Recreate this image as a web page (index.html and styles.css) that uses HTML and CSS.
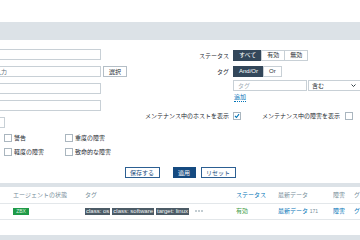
FILE: index.html
```html
<!DOCTYPE html>
<html lang="ja">
<head>
<meta charset="UTF-8">
<meta name="viewport" content="width=device-width, initial-scale=1.0">
<title>ホスト</title>
<link rel="stylesheet" href="styles.css">
</head>
<body>
    <div class="top"></div>
    <div class="tabbar"></div>
    <form class="filter">
        <div class="cols">
            <!-- 左側: 名前, ホストグループ, IP, DNS, ポート, 深刻度 -->
            <div class="col_left">
                <div class="row"><input class="text wide" type="text"></div>
                <div class="row">
                    <input class="text wide" type="text" placeholder="ここに入力">
                    <button class="btn_grey" type="button">選択</button>
                </div>
                <div class="row"><input class="text wide" type="text"></div>
                <div class="row"><input class="text wide" type="text"></div>
                <div class="row"><input class="text port" type="text"></div>
                <div class="sev">
                    <label class="chk"><span class="cb"></span>警告</label>
                    <label class="chk"><span class="cb"></span>重度の障害</label>
                    <label class="chk"><span class="cb"></span>軽度の障害</label>
                    <label class="chk"><span class="cb"></span>致命的な障害</label>
                </div>
            </div>
            <!-- 右側: ステータス, タグ, メンテナンス -->
            <div class="col_right">
                <div class="frow r1">
                    <span class="lbl">ステータス</span>
                    <div class="seg">
                        <span class="on">すべて</span>
                        <span>有効</span>
                        <span>無効</span>
                    </div>
                </div>
                <div class="frow r2">
                    <span class="lbl">タグ</span>
                    <div class="seg">
                        <span class="on">And/Or</span>
                        <span>Or</span>
                    </div>
                </div>
                <div class="frow r3">
                    <span class="lbl"></span>
                    <input class="text tagname" type="text" placeholder="タグ">
                    <div class="select">
                        <span>含む</span>
                        <svg width="5" height="3" viewBox="0 0 5 3"><path d="M0.5 0.5 L2.5 2.5 L4.5 0.5" fill="none" stroke="#1f2c33" stroke-width="0.9"/></svg>
                    </div>
                </div>
                <div class="frow r4">
                    <span class="lbl"></span>
                    <a class="add" href="#">追加</a>
                </div>
                <div class="frow r5">
                    <span class="lbl">メンテナンス中のホストを表示</span>
                    <span class="cb checked">
                        <svg width="6" height="6" viewBox="0 0 6 6"><path d="M1 3 L2.5 4.5 L5 1.2" fill="none" stroke="#0275b8" stroke-width="1.1"/></svg>
                    </span>
                    <span class="lbl2">メンテナンス中の障害を表示</span>
                    <span class="cb"></span>
                </div>
            </div>
        </div>
        <div class="actions">
            <button class="btn_alt save" type="button">保存する</button>
            <button class="btn_main" type="button">適用</button>
            <button class="btn_alt" type="button">リセット</button>
        </div>
    </form>

    <div class="list">
        <table>
            <colgroup>
                <col style="width:85px">
                <col style="width:151px">
                <col style="width:42px">
                <col style="width:55px">
                <col style="width:21px">
                <col style="width:46px">
            </colgroup>
            <thead>
                <tr>
                    <th class="first">エージェントの状態</th>
                    <th>タグ</th>
                    <th class="sort">ステータス</th>
                    <th>最新データ</th>
                    <th>障害</th>
                    <th>グラフ</th>
                </tr>
            </thead>
            <tbody>
                <tr>
                    <td class="first"><span class="zbx">ZBX</span></td>
                    <td>
                        <span class="tag">class: os</span><span class="tag">class: software</span><span class="tag">target: linux</span>
                        <svg class="more" width="8" height="2" viewBox="0 0 8 2"><circle cx="1" cy="1" r="0.8" fill="#768d99"/><circle cx="4" cy="1" r="0.8" fill="#768d99"/><circle cx="7" cy="1" r="0.8" fill="#768d99"/></svg>
                    </td>
                    <td class="green">有効</td>
                    <td><a href="#">最新データ</a> <sup>171</sup></td>
                    <td><a href="#">障害</a></td>
                    <td><a href="#">グラフ</a></td>
                </tr>
            </tbody>
        </table>
    </div>
</body>
</html>
```

FILE: styles.css
```css
*{margin:0;padding:0;box-sizing:border-box}
html,body{overflow:hidden}
body{width:360px;height:240px;background:#dce2e7;font-family:"Liberation Sans","Noto Sans CJK JP",sans-serif;font-size:6px;line-height:8px;color:#1f2c33}
a{color:#0275b8;text-decoration:none}
button,input{font-family:inherit;font-size:6px;color:#1f2c33}

.top {height: 22px; background: #fff;}
.tabbar {height: 18px;}
.filter {background: #fff; height: 143px; padding-top: 9px;}
.cols {display: flex;}

/* left column */
.col_left {margin-left: -28px; width: 155px; flex: none;}
.row {display: flex; align-items: center; height: 11px; margin-bottom: 6px;}
.text {height: 11px; border: 1px solid #c8d0d6; background: #fff; padding: 0 4px; outline: none;}
.text::placeholder {color: #5f6f7a;}
.wide {width: 129px;}
.port {width: 33px;}
.btn_grey {width: 24px; height: 11px; margin-left: 2px; border: 1px solid #b4bec6; background: #fff;}
.sev {display: grid; grid-template-columns: 61px 61px; row-gap: 6px; padding-left: 32px;}
.chk {display: flex; align-items: center; height: 8px;}
.chk .cb {margin-right: 2px;}
.cb {width: 8px; height: 8px; border: 1px solid #aab6bf; background: #fff; display: inline-flex; align-items: center; justify-content: center; flex: none;}

/* right column */
.col_right {margin-left: 13px; padding-top: 1px; flex: 1;}
.frow {display: flex; align-items: center; height: 11px;}
.lbl {width: 89px; text-align: right; margin-right: 4px; flex: none; white-space: nowrap;}
.r1 {margin-bottom: 5px;}
.r2 {margin-bottom: 3px;}
.r3 {margin-bottom: 3px;}
.r4 {height: 8px; margin-bottom: 10px;}
.r5 {height: 8px;}
.seg {display: flex;}
.seg span {height: 11px; line-height: 9px; padding: 0 5px; border: 1px solid #c8d0d6; margin-left: -1px; background: #fff;}
.seg span:first-child {margin-left: 0;}
.seg span.on {background: #33475a; border-color: #33475a; color: #fff;}
.tagname {width: 74px;}
.text.tagname::placeholder {color: #a3aeb6;}
.select {width: 53px; height: 11px; margin-left: 1px; border: 1px solid #c8d0d6; display: flex; align-items: center; justify-content: space-between; padding: 0 4px 0 3px;}
.add {border-bottom: 1px dotted #0275b8; line-height: 7px; margin-left: 1px;}
.lbl2 {margin-left: 21px; margin-right: 5px; white-space: nowrap;}

/* buttons */
.actions {display: flex; justify-content: center; margin-top: 11px;}
.actions button {height: 11px; padding: 0;}
.btn_alt {width: 35px; background: #fff; border: 1px solid #2c5f92; color: #1d4f80;}
.save {margin-right: 13px;}
.btn_main {width: 23px; margin-right: 5px; background: #154a80; border: 1px solid #154a80; color: #fff;}

/* host list */
.list {background: #fff; margin-top: 4px; height: 48px; overflow: hidden;}
.list table {width: 400px; table-layout: fixed; border-collapse: collapse;}
.list th, .list td {height: 16px; text-align: left; font-weight: normal; white-space: nowrap; overflow: hidden; border-bottom: 1px solid #e3e7ea; vertical-align: middle;}
.list th {color: #768d99;}
.list th.sort {color: #0275b8;}
.list .first {padding-left: 13px;}
.zbx {display: inline-block; width: 16px; height: 7px; line-height: 7px; font-size: 5px; text-align: center; background: #1f9a48; color: #d9f2df;}
.tag {display: inline-block; height: 7px; line-height: 7px; padding: 0 1px; margin-right: 2px; background: #4c5b66; color: #f2f4f5; vertical-align: middle;}
.more {margin-left: 2px; vertical-align: middle;}
.green {color: #3b9a3f;}
.list sup {font-size: 5px; color: #768d99; vertical-align: baseline;}
```
